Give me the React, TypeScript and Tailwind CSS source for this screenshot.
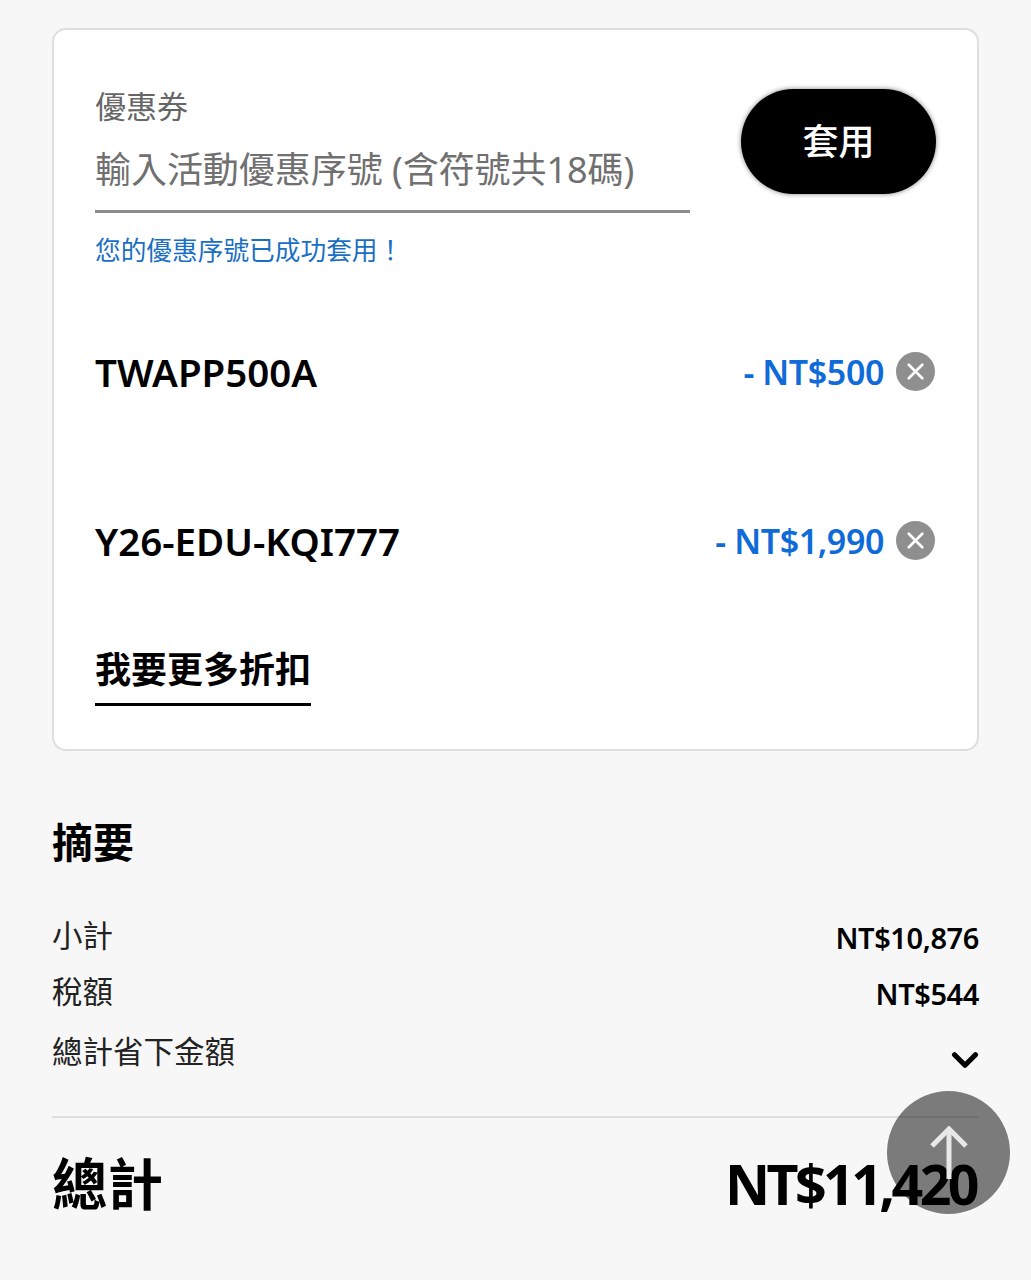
import { ChevronDown, X } from "lucide-react";

const cjk = "font-['Noto_Sans','Noto_Sans_CJK_TC',sans-serif]";

function CouponRow({ code, amount }: { code: string; amount: string }) {
  return (
    <div className="flex h-[40px] items-center justify-between">
      <span className="mt-[2px] text-[38.5px] font-semibold leading-none text-black">{code}</span>
      <div className="mr-[1px] flex items-center gap-[12px]">
        <span className="mt-[1px] text-[34px] font-semibold leading-none tracking-[-0.4px] text-[#0f6bd8]">{amount}</span>
        <span className="flex size-[39px] items-center justify-center rounded-full bg-[#8f8f8f]">
          <X className="size-[27px] text-white" strokeWidth={2.4} />
        </span>
      </div>
    </div>
  );
}

function SummaryRow({ label, value }: { label: string; value: string }) {
  return (
    <div className="flex h-[56px] items-center justify-between">
      <span className="mb-[4px] text-[30.5px] leading-none text-[#222]">{label}</span>
      <span className="text-[29px] font-semibold leading-none tracking-[-0.4px] text-black">{value}</span>
    </div>
  );
}

export default function App() {
  return (
    <div className={`relative h-[1280px] overflow-hidden bg-[#f7f7f7] px-[52px] pt-[28px] ${cjk}`}>
      {/* Coupon card */}
      <div className="h-[723px] rounded-[14px] border-2 border-[#dedede] bg-white px-[41px] pt-[58px]">
        <div className="flex items-start gap-[51px]">
          <div className="w-[595px]">
            <div className="-mt-[1px] text-[31px] leading-[38px] text-[#666]">優惠券</div>
            <div className="mt-[9px] h-[79px] border-b-[3px] border-[#8c8c8c] pt-[11px] text-[36px] leading-[50px] tracking-[-0.05px] text-[#707070]">
              輸入活動優惠序號 (含符號共18碼)
            </div>
          </div>
          <button className="mt-[1px] h-[105px] w-[195px] rounded-full bg-black text-[36px] font-medium text-white shadow-[0_0_5px_rgba(0,0,0,0.5)]">
            套用
          </button>
        </div>
        <div className="mt-[19px] text-[25.7px] leading-[38px] text-[#1a6fc4]">您的優惠序號已成功套用！</div>

        <div className="mt-[81px]">
          <CouponRow code="TWAPP500A" amount="- NT$500" />
        </div>
        <div className="mt-[129px]">
          <CouponRow code="Y26-EDU-KQI777" amount="- NT$1,990" />
        </div>

        <div className="mt-[86px] inline-block border-b-[3px] border-black pb-[9px] text-[36px] font-bold leading-[48px] text-black">
          我要更多折扣
        </div>
      </div>

      {/* Summary */}
      <h2 className="mt-[63px] text-[41px] font-bold leading-[56px] text-black">摘要</h2>
      <div className="mt-[39px]">
        <SummaryRow label="小計" value="NT$10,876" />
        <SummaryRow label="稅額" value="NT$544" />
        <div className="flex h-[60px] items-center justify-between">
          <span className="text-[30.5px] leading-none text-[#222]">總計省下金額</span>
          <ChevronDown className="-mr-[7px] mt-[18px] size-[42px] text-black" strokeWidth={3} />
        </div>
      </div>

      <div className="mt-[35px] flex items-center justify-between border-t-2 border-[#dedede] pt-[28px]">
        <span className="text-[55.5px] font-bold leading-[76px] text-black">總計</span>
        <span className="mr-[3px] text-[55.5px] font-bold leading-[76px] tracking-[-3.6px] text-black">NT$11,420</span>
      </div>

      {/* Back to top */}
      <button className="absolute left-[887px] top-[1091px] flex size-[123px] items-center justify-center rounded-full bg-black/50">
        <svg width="40" height="54" viewBox="0 0 40 54" fill="none" stroke="#e8e8e8" strokeWidth="5">
          <path d="M20 3v50" />
          <path d="M3 20 20 3l17 17" />
        </svg>
      </button>
    </div>
  );
}
